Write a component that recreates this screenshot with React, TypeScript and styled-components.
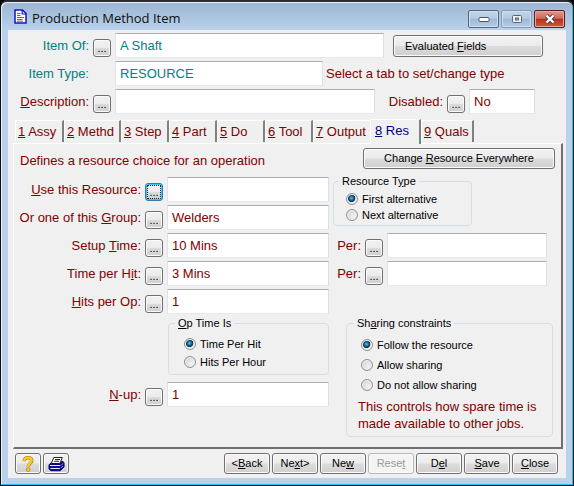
import React, { ReactNode, useId, useState } from "react";
import styled, { createGlobalStyle, css } from "styled-components";

const GlobalStyle = createGlobalStyle`
  *, *::before, *::after { box-sizing: border-box; }
  html, body { margin: 0; background: #000; }
  body, button, input { font-family: "Liberation Sans", Arial, sans-serif; }
  button, input { margin: 0; }
  u { text-underline-offset: 1px; text-decoration-thickness: 1px; }
`;

const maroon = "#800000";
const teal = "#008080";
const face = "#f0f0f0";

const Window = styled.main`
  display: flex;
  flex-direction: column;
  min-height: 100vh;
  padding: 0 7px 7px 6px;
  border: 1px solid #101014;
  border-top: 2px solid #2b2a30;
  border-radius: 7px 7px 0 0;
  background: linear-gradient(#9bb5d4 0, #b9d1ea 28px, #b9d1ea 100%);
  box-shadow: inset -1px -1px 0 #22c4e4, inset 1px 1px 0 #e9f1f9;
`;

const TitleBar = styled.header`
  display: flex;
  align-items: center;
  gap: 5px;
  height: 28px;
  padding: 0 1px 0 7px;
`;

const Title = styled.h1`
  flex: 1;
  margin: 0;
  padding-top: 3px;
  font: 400 13px/20px "Open Sans", "Noto Sans", sans-serif;
  color: #101010;
`;

const CaptionButtons = styled.div`
  display: flex;
  gap: 2px;
  padding-top: 6px;
`;

const CaptionButton = styled.button<{ $kind?: "close" | "dim" }>`
  display: grid;
  place-items: center;
  width: 31px;
  height: 18px;
  padding: 0;
  border: 1px solid ${(p) => (p.$kind === "close" ? "#5a1f1c" : p.$kind === "dim" ? "#8299b5" : "#53677f")};
  border-radius: 2px;
  background: ${(p) =>
    p.$kind === "close"
      ? "linear-gradient(#dc9a8c 0, #cf6a58 46%, #b5301c 50%, #cc5a42 100%)"
      : "linear-gradient(#c3d5ea 0, #b3c9e2 46%, #9db8d6 50%, #b4cce6 100%)"};
  box-shadow: inset 0 0 0 1px ${(p) => (p.$kind === "close" ? "#e5a99d" : "#cfdff0")};
`;

const Client = styled.form`
  display: flex;
  flex-direction: column;
  flex: 1;
  padding: 3px 3px 4px 5px;
  margin-left: 1px;
  background: ${face};
`;

const HeaderRows = styled.section`
  display: flex;
  flex-direction: column;
  gap: 3px;
`;

const Row = styled.div`
  display: flex;
  align-items: flex-start;
  height: 25px;
`;

const Label = styled.label<{ $width: number; $color?: string }>`
  flex: none;
  width: ${(p) => p.$width}px;
  padding-right: 4px;
  font-size: 13px;
  line-height: 26px;
  text-align: right;
  white-space: nowrap;
  color: ${(p) => p.$color ?? maroon};
`;

const Note = styled.p<{ $pad?: number }>`
  margin: 0;
  padding-left: ${(p) => p.$pad ?? 0}px;
  font-size: 13px;
  line-height: 26px;
  white-space: nowrap;
  color: ${maroon};
`;

const buttonFace = css`
  border: 1px solid #707070;
  border-radius: 3px;
  background: linear-gradient(#f3f3f3 0, #ebebeb 48%, #dcdcdc 52%, #cfcfcf 100%);
  box-shadow: inset 0 0 0 1px #fbfbfb;
  color: #000;
`;

const PickButton = styled.button<{ $active?: boolean }>`
  ${buttonFace}
  flex: none;
  width: 18px;
  height: 18px;
  margin: 6px 4px 0 0;
  padding: 0;
  font-size: 11px;
  line-height: 14px;
  ${(p) =>
    p.$active &&
    css`
      border-color: #2f7fae;
      box-shadow: inset 0 0 0 1px #3cc4f2;
      outline: 1px dotted #222;
      outline-offset: -3px;
    `}
`;

const PickSpacer = styled.span`
  flex: none;
  width: 22px;
`;

const Field = styled.input<{ $color?: string; $max?: number }>`
  flex: 1;
  min-width: 0;
  max-width: ${(p) => (p.$max ? `${p.$max}px` : "none")};
  height: 25px;
  padding: 0 4px;
  border: 1px solid;
  border-color: #abadb3 #dbdfe6 #e3e9ef #e2e3ea;
  border-radius: 1px;
  background: #fff;
  font-size: 13px;
  color: ${(p) => p.$color ?? maroon};
  outline: none;
`;

const Button = styled.button<{ $left?: boolean }>`
  ${buttonFace}
  height: 21px;
  padding: 0 ${(p) => (p.$left ? 11 : 0)}px;
  font-size: 11px;
  line-height: 17px;
  text-align: ${(p) => (p.$left ? "left" : "center")};
  white-space: nowrap;
  &:disabled {
    border-color: #b4b8bc;
    background: #f4f4f4;
    color: #9a9a9a;
  }
`;

const EvaluatedButton = styled(Button)`
  width: 150px;
  height: 22px;
  margin: 2px 0 0 9px;
`;

const EverywhereButton = styled(Button)`
  width: 192px;
`;

const Tabs = styled.nav`
  display: flex;
  align-items: flex-end;
  height: 25px;
  margin-top: 4px;
  padding-left: 2px;
`;

const Tab = styled.button<{ $width: number; $active: boolean; $edge: boolean }>`
  position: relative;
  width: ${(p) => p.$width}px;
  height: ${(p) => (p.$active ? 25 : 22)}px;
  margin-bottom: ${(p) => (p.$active ? -1 : 1)}px;
  padding: ${(p) => (p.$active ? "0 0 3px 4px" : "0 0 0 2px")};
  border: solid;
  border-width: 1px ${(p) => (p.$edge ? 0 : 2)}px 0 1px;
  border-color: #fff #808080 #fff #fff;
  background: ${face};
  font-size: 13px;
  line-height: 20px;
  text-align: left;
  white-space: nowrap;
  color: ${(p) => (p.$active ? "#000080" : maroon)};
`;

const Panel = styled.section`
  flex: 1;
  padding: 4px 6px 9px 0;
  border: 1px solid;
  border-width: 1px 2px 2px 1px;
  border-color: #fff #707070 #707070 #fff;
`;

const PanelTop = styled.div`
  display: flex;
  justify-content: space-between;
  padding-left: 6px;
  height: 26px;
`;

const Columns = styled.div`
  display: grid;
  grid-template-columns: minmax(0, 315fr) minmax(0, 222fr);
  gap: 4px;
`;

const Left = styled.div`
  display: flex;
  flex-direction: column;
  gap: 3px;
  padding-top: 3px;
`;

const Right = styled.div`
  display: flex;
  flex-direction: column;
`;

const PerRows = styled.div`
  display: flex;
  flex-direction: column;
  gap: 3px;
  margin: 7px 8px 30px 0;
`;

const Group = styled.fieldset<{ $kind: "type" | "time" | "share" }>`
  min-width: 0;
  margin: 0;
  border: 1px solid #d3dfe5;
  border-radius: 4px;
  ${(p) =>
    p.$kind === "type"
      ? "width: 139px; height: 52px; padding: 2px 0 0 12px;"
      : p.$kind === "time"
        ? "margin: -1px 0 4px 154px; height: 59px; padding: 4px 0 0 15px;"
        : "margin: 0 2px 0 13px; padding: 4px 0 4px 14px;"}
`;

const Legend = styled.legend<{ $indent?: boolean }>`
  margin-left: ${(p) => (p.$indent ? -9 : -7)}px;
  padding: 0 3px;
  font-size: 11px;
  line-height: 15px;
  color: #000;
`;

const RadioLabel = styled.label<{ $line: number }>`
  display: flex;
  align-items: center;
  gap: 4px;
  height: ${(p) => p.$line}px;
  font-size: 11px;
  white-space: nowrap;
  color: #000;
`;

const Radio = styled.input`
  appearance: none;
  flex: none;
  width: 12px;
  height: 12px;
  border: 1px solid #8e8f8f;
  border-radius: 50%;
  background: radial-gradient(circle at 65% 65%, #f2f2f2 0, #c9cccf 100%);
  box-shadow: inset 0 0 0 1px #f4f4f4;
  &:checked {
    background: radial-gradient(circle at 45% 42%, #5fc6ee 0, #13608f 28%, #0a2c47 44%, #e4e8ea 52%);
  }
`;

const ShareNote = styled.p`
  margin: 3px 0 0 -3px;
  font-size: 13px;
  line-height: 17px;
  color: ${maroon};
`;

const Footer = styled.footer`
  display: flex;
  gap: 2px;
  padding: 4px 5px 0 2px;
`;

const IconButton = styled(Button)`
  display: grid;
  place-items: center;
  width: 26px;
`;

const FooterButton = styled(Button)`
  width: 46px;
`;

const Spring = styled.span`
  flex: 1;
`;

const DocIcon = () => (
  <svg width="13" height="15" viewBox="0 0 13 15" aria-hidden="true">
    <path d="M1 1H8.5L12 4.5V14H1Z" fill="#fff" stroke="#1414c8" strokeWidth="1.5" />
    <path d="M8.2 1V5H12" fill="none" stroke="#1414c8" strokeWidth="1.2" />
    <path d="M3 4.5H6.5M3 6.5H6.5M3 8.5H10M3 10.5H8.5M3 12.2H9" stroke="#555" strokeWidth="0.9" />
  </svg>
);

const HelpIcon = () => (
  <svg width="12" height="16" viewBox="0 0 12 16" aria-hidden="true">
    <path d="M2.2 5.2C2.2 2.8 3.7 1.8 6 1.8S9.8 3 9.8 4.8C9.8 7.4 6.2 7.4 6.2 10.6" fill="none" stroke="#a87b12" strokeWidth="3.4" />
    <path d="M2.2 5C2.2 2.8 3.7 1.8 6 1.8S9.6 3 9.6 4.8C9.6 7.4 6.1 7.2 6.1 10.4" fill="none" stroke="#fbcb2c" strokeWidth="2.4" />
    <circle cx="6.2" cy="13.6" r="1.9" fill="#fbcb2c" stroke="#a87b12" strokeWidth="0.7" />
  </svg>
);

const PrinterIcon = () => (
  <svg width="17" height="16" viewBox="0 0 17 16" aria-hidden="true">
    <path d="M5.8 1.5H14.3L11.8 7.5H3.3Z" fill="#fff" stroke="#222" />
    <path d="M7 3.5H12M6.2 5.3H11" stroke="#222" />
    <path d="M3.3 6.5L1 9V13L3 14.7H12.3L16 11V6.5L14 5L12.3 8H3" fill="#10108c" stroke="#000070" />
    <path d="M2 9.5H12.2M2.4 12.5H11.8" stroke="#e9e9f4" />
    <path d="M13.2 9.4L15 7.4M13.2 12L15 10" stroke="#b8b8e0" strokeWidth="0.8" />
  </svg>
);

type PickFieldProps = {
  label: ReactNode;
  name: string;
  value?: string;
  labelWidth?: number;
  color?: string;
  pick?: boolean;
  active?: boolean;
  max?: number;
  after?: ReactNode;
};

function PickField({ label, name, value = "", labelWidth = 131, color, pick = true, active, max, after }: PickFieldProps) {
  const id = useId();
  return (
    <Row>
      <Label htmlFor={id} $width={labelWidth} $color={color}>{label}</Label>
      {pick ? <PickButton type="button" $active={active} aria-label={`Choose ${name}`}>...</PickButton> : <PickSpacer />}
      <Field id={id} defaultValue={value} $color={color} $max={max} />
      {after}
    </Row>
  );
}

type RadioSetProps = { name: string; line: number; options: string[] };

function RadioSet({ name, line, options }: RadioSetProps) {
  return (
    <>
      {options.map((text, i) => (
        <RadioLabel key={text} $line={line}>
          <Radio type="radio" name={name} defaultChecked={i === 0} />
          {text}
        </RadioLabel>
      ))}
    </>
  );
}

const tabs = [
  { key: "1", text: "Assy", width: 49 },
  { key: "2", text: "Methd", width: 57 },
  { key: "3", text: "Step", width: 48 },
  { key: "4", text: "Part", width: 48 },
  { key: "5", text: "Do", width: 48 },
  { key: "6", text: "Tool", width: 48 },
  { key: "7", text: "Output", width: 57 },
  { key: "8", text: "Res", width: 51 },
  { key: "9", text: "Quals", width: 53 },
];

export default function App() {
  const [active, setActive] = useState(7);
  return (
    <>
      <GlobalStyle />
      <Window>
        <TitleBar>
          <DocIcon />
          <Title>Production Method Item</Title>
          <CaptionButtons>
            <CaptionButton type="button" aria-label="Minimize">
              <svg width="12" height="6" viewBox="0 0 12 6"><rect x="1" y="1.5" width="10" height="4" rx="1" fill="#fff" stroke="#4a5568" /></svg>
            </CaptionButton>
            <CaptionButton type="button" $kind="dim" aria-label="Maximize">
              <svg width="12" height="10" viewBox="0 0 12 10"><rect x="1.5" y="1.5" width="9" height="7" rx="1" fill="#eef3f9" stroke="#56657a" /><rect x="4.5" y="4" width="3" height="2" fill="#9db8d6" stroke="#56657a" /></svg>
            </CaptionButton>
            <CaptionButton type="button" $kind="close" aria-label="Close window">
              <svg width="12" height="10" viewBox="0 0 12 10"><path d="M2.5 1.5L9.5 8.5M9.5 1.5L2.5 8.5" stroke="#4c3a44" strokeWidth="4" /><path d="M2.5 1.5L9.5 8.5M9.5 1.5L2.5 8.5" stroke="#fff" strokeWidth="2.4" /></svg>
            </CaptionButton>
          </CaptionButtons>
        </TitleBar>
        <Client onSubmit={(e) => e.preventDefault()}>
          <HeaderRows>
            <PickField
              label="Item Of:" name="item" value="A Shaft" labelWidth={80} color={teal} max={269}
              after={<EvaluatedButton type="button" $left>Evaluated <u>F</u>ields</EvaluatedButton>}
            />
            <PickField
              label="Item Type:" name="type" value="RESOURCE" labelWidth={80} color={teal} pick={false} max={208}
              after={<Note $pad={3}>Select a tab to set/change type</Note>}
            />
            <Row>
              <Label htmlFor="description" $width={80}><u>D</u>escription:</Label>
              <PickButton type="button" aria-label="Choose description">...</PickButton>
              <Field id="description" $max={260} />
              <Label htmlFor="disabled" $width={72}>Disabled:</Label>
              <PickButton type="button" aria-label="Choose disabled">...</PickButton>
              <Field id="disabled" defaultValue="No" $max={66} />
            </Row>
          </HeaderRows>
          <Tabs role="tablist">
            {tabs.map((t, i) => (
              <Tab
                key={t.key} type="button" role="tab" aria-selected={i === active}
                $width={t.width} $active={i === active} $edge={i + 1 === active}
                onClick={() => setActive(i)}
              >
                <u>{t.key}</u> {t.text}
              </Tab>
            ))}
          </Tabs>
          <Panel role="tabpanel">
            <PanelTop>
              <Note>Defines a resource choice for an operation</Note>
              <EverywhereButton type="button">Change <u>R</u>esource Everywhere</EverywhereButton>
            </PanelTop>
            <Columns>
              <Left>
                <PickField label={<><u>U</u>se this Resource:</>} name="resource" active />
                <PickField label={<>Or one of this <u>G</u>roup:</>} name="group" value="Welders" />
                <PickField label={<>Setup <u>T</u>ime:</>} name="setup time" value="10 Mins" />
                <PickField label={<>Time per H<u>i</u>t:</>} name="time per hit" value="3 Mins" />
                <PickField label={<><u>H</u>its per Op:</>} name="hits per op" value="1" />
                <Group $kind="time">
                  <Legend $indent><u>O</u>p Time Is</Legend>
                  <RadioSet name="time" line={18} options={["Time Per Hit", "Hits Per Hour"]} />
                </Group>
                <PickField label={<><u>N</u>-up:</>} name="n-up" value="1" />
              </Left>
              <Right>
                <Group $kind="type">
                  <Legend>Resource T<u>y</u>pe</Legend>
                  <RadioSet name="type" line={16} options={["First alternative", "Next alternative"]} />
                </Group>
                <PerRows>
                  <PickField label="Per:" name="setup unit" labelWidth={32} />
                  <PickField label="Per:" name="hit unit" labelWidth={32} />
                </PerRows>
                <Group $kind="share">
                  <Legend>Sh<u>a</u>ring constraints</Legend>
                  <RadioSet name="share" line={20} options={["Follow the resource", "Allow sharing", "Do not allow sharing"]} />
                  <ShareNote>This controls how spare time is made available to other jobs.</ShareNote>
                </Group>
              </Right>
            </Columns>
          </Panel>
          <Footer>
            <IconButton type="button" aria-label="Help"><HelpIcon /></IconButton>
            <IconButton type="button" aria-label="Print"><PrinterIcon /></IconButton>
            <Spring />
            <FooterButton type="button">&lt;<u>B</u>ack</FooterButton>
            <FooterButton type="button">Ne<u>x</u>t&gt;</FooterButton>
            <FooterButton type="button">Ne<u>w</u></FooterButton>
            <FooterButton type="button" disabled>Rese<u>t</u></FooterButton>
            <FooterButton type="button">D<u>e</u>l</FooterButton>
            <FooterButton type="button"><u>S</u>ave</FooterButton>
            <FooterButton type="button"><u>C</u>lose</FooterButton>
          </Footer>
        </Client>
      </Window>
    </>
  );
}
